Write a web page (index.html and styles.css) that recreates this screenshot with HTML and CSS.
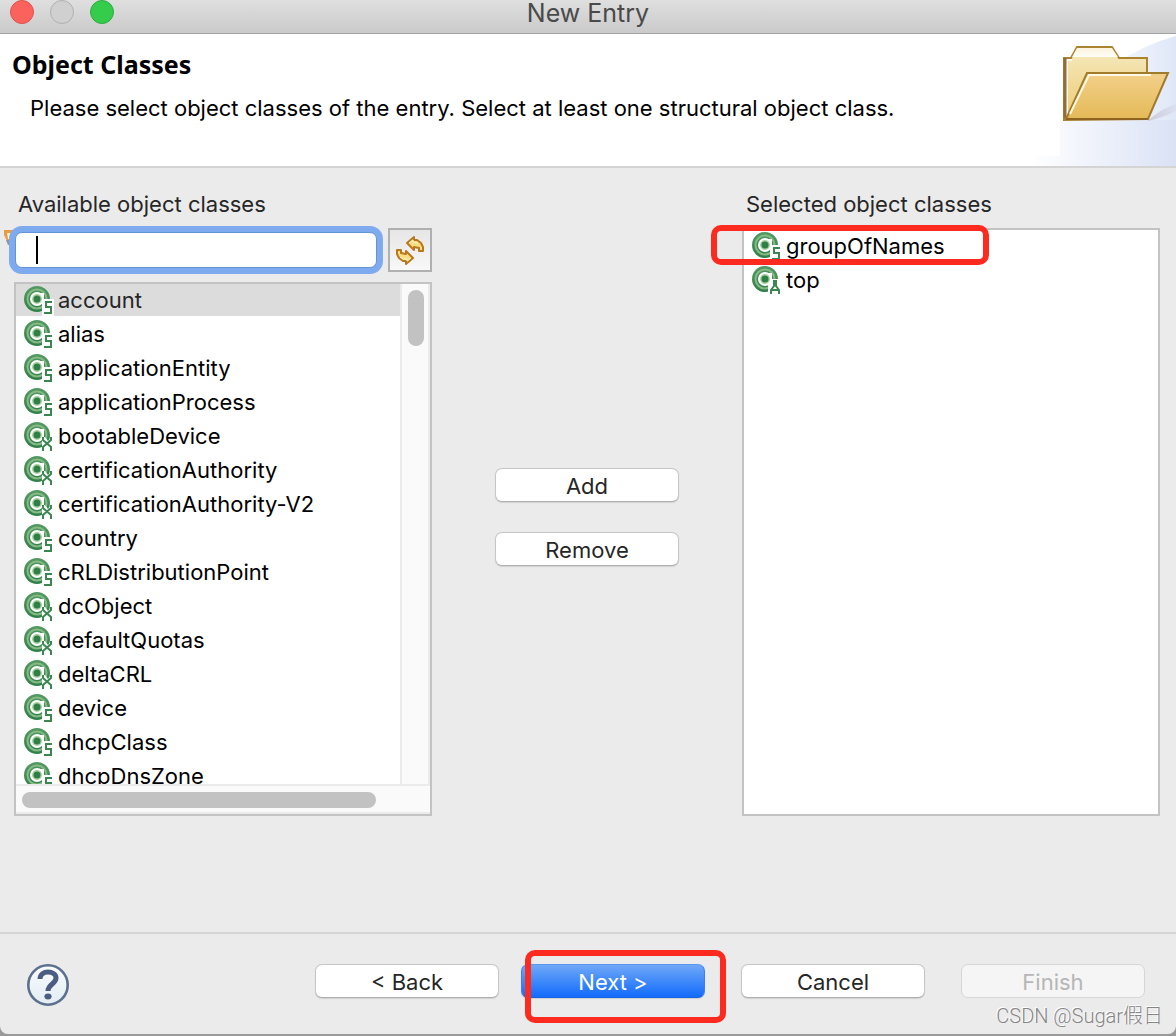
FILE: index.html
```html
<!DOCTYPE html>
<html lang="en">
<head>
<meta charset="utf-8">
<title>New Entry</title>
<link rel="stylesheet" href="styles.css">
</head>
<body>
<svg class="defs" aria-hidden="true">
  <defs>
    <linearGradient id="ring" x1="0" y1="0" x2="0" y2="1">
      <stop offset="0" stop-color="#559a64"/><stop offset="1" stop-color="#2f8048"/>
    </linearGradient>
    <symbol id="class-base" viewBox="0 0 32 32">
      <circle cx="15" cy="15" r="13" fill="url(#ring)"/>
      <circle cx="15" cy="15" r="9.500" fill="none" stroke="#86ba86" stroke-width="2"/>
      <circle cx="15" cy="15" r="7" fill="#fff"/>
      <path d="M18 9h4v11h-4z" fill="#fff"/>
      <circle cx="15" cy="15" r="5" fill="#a9d09f"/>
      <circle cx="15" cy="15" r="3.500" fill="#2f8048"/>
    </symbol>
    <symbol id="class-s" viewBox="0 0 32 32">
      <use href="#class-base"/>
      <path d="M20 15h12v17H20z" fill="#fff"/>
      <path d="M30 18h-6v5h5v6h-7" fill="none" stroke="#3b8752" stroke-width="2"/>
    </symbol>
    <symbol id="class-x" viewBox="0 0 32 32">
      <use href="#class-base"/>
      <path d="M20 17l3 0 3 4 4-4h2v15H20z" fill="#fff"/>
      <path d="M21 17v3l8 7v4M29 17v3l-8 7v4" fill="none" stroke="#3b8752" stroke-width="2"/>
    </symbol>
    <symbol id="class-a" viewBox="0 0 32 32">
      <use href="#class-base"/>
      <path d="M18 20l4-5h6l4 5v12H18z" fill="#fff"/>
      <path d="M21 30v-4l3-4v-5h2v5l3 4v4M22 26h6" fill="none" stroke="#3b8752" stroke-width="2"/>
    </symbol>
  </defs>
</svg>

<div class="window">
  <header class="titlebar">
    <div class="lights">
      <button class="light close" aria-label="Close"></button>
      <button class="light minimize" aria-label="Minimize" disabled></button>
      <button class="light maximize" aria-label="Zoom"></button>
    </div>
    <div class="title">New Entry</div>
  </header>

  <section class="banner">
    <div class="banner-text">
      <h1>Object Classes</h1>
      <p>Please select object classes of the entry. Select at least one structural object class.</p>
    </div>
    <svg class="banner-art" viewBox="0 0 146 132" aria-hidden="true">
      <defs>
        <linearGradient id="sky" x1="0" x2="1"><stop offset="0" stop-color="#fff"/><stop offset="1" stop-color="#dae2f5"/></linearGradient>
        <linearGradient id="sky2" x1="0" x2="1"><stop offset="0" stop-color="#f4f7fd"/><stop offset="1" stop-color="#dfe7f7"/></linearGradient>
        <linearGradient id="back" x1="0" y1="0" x2="0" y2="1"><stop offset="0" stop-color="#f5eac0"/><stop offset="1" stop-color="#edca70"/></linearGradient>
        <linearGradient id="front" x1="0" y1="0" x2="0" y2="1"><stop offset="0" stop-color="#f3d08b"/><stop offset="1" stop-color="#e4b957"/></linearGradient>
        <linearGradient id="tab" x1="0" y1="0" x2="0" y2="1"><stop offset="0" stop-color="#faf3dc"/><stop offset="1" stop-color="#fffdf7"/></linearGradient>
        <linearGradient id="shade" x1="0" x2="1"><stop offset="0" stop-color="#c4bccb"/><stop offset="1" stop-color="#d9ddef"/></linearGradient>
      </defs>
      <path d="M85 30Q115 10 146 2V132H85z" fill="url(#sky2)"/>
      <path d="M30 86H146V132H0V122H30z" fill="url(#sky)"/>
      <path d="M118 86L132 76 146 70V77Q135 83 118 87z" fill="url(#shade)" opacity=".7"/>
      <path d="M34 86V24h7l6-11h35l7 11h28v61z" fill="url(#back)" stroke="#a9832f" stroke-width="2"/>
      <path d="M42 23l5-9h35l6 9z" fill="url(#tab)"/>
      <path d="M37 82V26h5" fill="none" stroke="#fffaf0" stroke-width="2"/>
      <path d="M35 24v60" stroke="#946b3c" stroke-width="3"/>
      <path d="M57 39h81L118 85H36z" fill="url(#front)" stroke="#a17b2c" stroke-width="2"/>
      <path d="M40 80L59 41h62" fill="none" stroke="#fff8e4" stroke-width="2"/>
      <path d="M36 85h82" stroke="#8e6420" stroke-width="2"/>
    </svg>
  </section>

  <main class="content">
    <section class="column">
      <label class="caption caption-left" for="filter">Available object classes</label>
      <div class="filter-row">
        <svg class="hint" viewBox="0 0 12 16" aria-hidden="true"><path d="M0 0h12v6L8 11H3L0 5z" fill="#e99a45"/><path d="M3 3h4v6H4z" fill="#fff0c8"/><path d="M2 10h7v5H4z" fill="#8d949c"/></svg>
        <div class="filter-box">
          <input class="filter" id="filter" type="text">
          <span class="caret"></span>
        </div>
        <button class="refresh" aria-label="Refresh">
          <svg viewBox="0 0 32 32" aria-hidden="true">
            <g fill="#f9dc83" stroke="#b9781c" stroke-width="2" stroke-linejoin="round">
              <path d="M13 9l7-6v3h3l4 3 2 4v4h-4v-3l-5-1v3z"/>
              <path d="M19 24l-7 6v-3h-3l-4-3-2-4v-4h4v3l5 1v-3z"/>
            </g>
            <path d="M15 9l4-3v2l5 1M6 23l3 2h4v2l4-3" fill="none" stroke="#fff4c8" stroke-width="1"/>
          </svg>
        </button>
      </div>
      <div class="listbox scrollable">
        <ul class="items" role="listbox" aria-label="Available object classes">
          <li class="item selected" role="option" aria-selected="true"><svg class="icon"><use href="#class-s"/></svg>account</li>
          <li class="item" role="option"><svg class="icon"><use href="#class-s"/></svg>alias</li>
          <li class="item" role="option"><svg class="icon"><use href="#class-s"/></svg>applicationEntity</li>
          <li class="item" role="option"><svg class="icon"><use href="#class-s"/></svg>applicationProcess</li>
          <li class="item" role="option"><svg class="icon"><use href="#class-x"/></svg>bootableDevice</li>
          <li class="item" role="option"><svg class="icon"><use href="#class-x"/></svg>certificationAuthority</li>
          <li class="item" role="option"><svg class="icon"><use href="#class-x"/></svg>certificationAuthority-V2</li>
          <li class="item" role="option"><svg class="icon"><use href="#class-s"/></svg>country</li>
          <li class="item" role="option"><svg class="icon"><use href="#class-s"/></svg>cRLDistributionPoint</li>
          <li class="item" role="option"><svg class="icon"><use href="#class-x"/></svg>dcObject</li>
          <li class="item" role="option"><svg class="icon"><use href="#class-x"/></svg>defaultQuotas</li>
          <li class="item" role="option"><svg class="icon"><use href="#class-x"/></svg>deltaCRL</li>
          <li class="item" role="option"><svg class="icon"><use href="#class-s"/></svg>device</li>
          <li class="item" role="option"><svg class="icon"><use href="#class-s"/></svg>dhcpClass</li>
          <li class="item" role="option"><svg class="icon"><use href="#class-s"/></svg>dhcpDnsZone</li>
        </ul>
        <div class="track track-y"><div class="thumb"></div></div>
        <div class="track track-x"><div class="thumb"></div></div>
      </div>
    </section>

    <div class="transfer">
      <button class="btn">Add</button>
      <button class="btn">Remove</button>
    </div>

    <section class="column">
      <div class="caption">Selected object classes</div>
      <div class="listbox">
        <ul class="items" role="listbox" aria-label="Selected object classes">
          <li class="item" role="option"><svg class="icon"><use href="#class-s"/></svg>groupOfNames</li>
          <li class="item" role="option"><svg class="icon"><use href="#class-a"/></svg>top</li>
        </ul>
        <span class="mark mark-entry"></span>
      </div>
    </section>
  </main>

  <footer class="footer">
    <button class="help" aria-label="Help">
      <svg viewBox="0 0 42 42" aria-hidden="true">
        <defs><linearGradient id="glass" x1="0" y1="0" x2="0" y2="1"><stop offset="0" stop-color="#f8fbfd"/><stop offset="1" stop-color="#e3edf3"/></linearGradient></defs>
        <circle cx="21" cy="21" r="19.7" fill="url(#glass)" stroke="#5b6f8f" stroke-width="2.6"/>
        <path d="M13 15c0-5 4-7 8-7s8 2 8 6c0 6-8 6-8 13" fill="none" stroke="#4b5d80" stroke-width="5"/>
        <ellipse cx="21" cy="32.500" rx="3.600" ry="3" fill="#4b5d80"/>
      </svg>
    </button>
    <div class="pair">
      <button class="btn">&lt; Back</button>
      <div class="next-wrap">
        <button class="btn primary">Next &gt;</button>
        <span class="mark mark-next"></span>
      </div>
    </div>
    <button class="btn">Cancel</button>
    <button class="btn" disabled>Finish</button>
    <span class="watermark">CSDN @Sugar假日</span>
  </footer>
</div>
</body>
</html>
```
FILE: styles.css
```css
* { box-sizing: border-box; }

body {
  margin: 0;
  background: #999;
  color: #000;
  font: 22px/32px Inter, "Noto Sans CJK SC", sans-serif;
}

button, input { font: inherit; }

.defs { position: absolute; width: 0; height: 0; }

.window {
  display: flex;
  flex-direction: column;
  height: calc(100vh - 2px);
  background: #ebebeb;
  border-radius: 0 0 8px 8px;
}

/* Title bar */
.titlebar {
  display: grid;
  grid-template-columns: 1fr auto 1fr;
  align-items: start;
  height: 34px;
  padding: 0 10px;
  background: linear-gradient(#dfdfdf, #cacaca);
  border-bottom: 1px solid #a3a3a3;
}
.lights { display: flex; gap: 16px; }
.light {
  width: 24px;
  height: 24px;
  padding: 0;
  border: 1px solid;
  border-radius: 50%;
}
.close { background: #fc625d; border-color: #e0504b; }
.minimize { background: #d0d0d0; border-color: #b0b0b0; }
.maximize { background: #35cb4b; border-color: #2aad3c; }
.title { font-size: 25px; line-height: 26px; color: #4a4a4a; }

/* Wizard banner */
.banner {
  display: flex;
  justify-content: space-between;
  height: 134px;
  background: #fff;
  border-bottom: 2px solid #d4d4d4;
}
.banner-text { padding: 14px 0 0 12px; }
.banner h1 {
  margin: 0;
  font: bold 25px/32px "Noto Sans", sans-serif;
}
.banner p { margin: 12px 0 0 18px; }
.banner-art { width: 146px; height: 132px; }

/* Lists */
.content {
  display: grid;
  grid-template-columns: 1fr 310px 1fr;
  grid-template-rows: minmax(0, 1fr);
  flex: 1;
  min-height: 0;
  padding: 20px 16px 116px 14px;
}
.column {
  display: flex;
  flex-direction: column;
  min-height: 0;
}
.caption { padding-left: 4px; margin-bottom: 8px; color: #262626; }

.filter-row {
  position: relative;
  display: flex;
  align-items: center;
  gap: 11px;
  margin-bottom: 10px;
  padding-left: 1px;
}
.hint { position: absolute; left: -10px; top: 2px; width: 12px; height: 16px; }
.filter-box { position: relative; flex: 1; display: flex; }
.filter {
  width: 100%;
  height: 36px;
  padding: 0 18px;
  background: #fff;
  border: 1px solid #6692d8;
  border-radius: 7px;
  outline: none;
  box-shadow: 0 0 0 6px #7eaaf0;
}
.caret { position: absolute; left: 21px; top: 4px; width: 2px; height: 28px; background: #000; }
.refresh {
  display: flex;
  width: 44px;
  height: 44px;
  padding: 4px;
  background: linear-gradient(#e6e6e6, #f8f8f8);
  border: 2px solid #b0b0b0;
}

.listbox {
  position: relative;
  flex: 1;
  min-height: 0;
  background: #fff;
  border: 2px solid #c3c3c3;
}
.scrollable {
  display: grid;
  grid-template: minmax(0, 1fr) 30px / minmax(0, 1fr) 30px;
  background: #fafafa;
}
.items {
  display: flex;
  flex-direction: column;
  gap: 2px;
  margin: 0;
  padding: 0;
  overflow: hidden;
  list-style: none;
  background: #fff;
}
.item {
  display: flex;
  flex: none;
  gap: 4px;
  height: 32px;
  padding-left: 6px;
}
.selected { background: #dcdcdc; color: #262626; }
.icon { width: 32px; height: 32px; }

.track { padding: 6px; }
.track-y { border: solid #ebebeb; border-width: 0 2px; padding: 6px 4px 6px 6px; }
.track-x { grid-column: 1 / 3; border: solid #ebebeb; border-width: 2px 0; }
.thumb { background: #c2c2c2; border-radius: 8px; }
.track-y .thumb { width: 16px; height: 56px; }
.track-x .thumb { width: 88%; height: 16px; }

/* Buttons */
.transfer {
  display: flex;
  flex-direction: column;
  align-items: center;
  justify-content: center;
  gap: 30px;
  padding-top: 30px;
}
.btn {
  width: 184px;
  height: 34px;
  padding: 2px 0 0;
  color: #262626;
  line-height: 30px;
  background: #fff;
  border: 1px solid #c6c6c6;
  border-bottom-color: #b0b0b0;
  border-radius: 7px;
  box-shadow: 0 1px 1px #d0d0d0;
}
.btn:disabled {
  color: #b6b6b6;
  background: #f5f5f5;
  border-color: #d6d6d6;
  box-shadow: none;
}
.primary {
  color: #fff;
  background: linear-gradient(#6fa8f7, #126bfd);
  border-color: #5a97f0 #3a80f0 #1763e0;
}

/* Footer */
.footer {
  position: relative;
  display: flex;
  gap: 36px;
  height: 102px;
  padding: 30px 31px 0 27px;
  border-top: 2px solid #d4d4d4;
}
.help {
  width: 42px;
  height: 42px;
  margin-right: auto;
  padding: 0;
  background: none;
  border: 0;
}
.help svg { display: block; }
.pair { display: flex; gap: 22px; }
.next-wrap { position: relative; height: 34px; display: flex; }

/* Highlight frames */
.mark {
  position: absolute;
  border: 6px solid #fd2b1f;
  border-radius: 10px;
  pointer-events: none;
}
.mark-entry { left: -33px; top: -5px; width: 278px; height: 40px; }
.mark-next { left: 4px; top: -14px; width: 201px; height: 73px; }

.watermark {
  position: absolute;
  right: 13px;
  bottom: 2px;
  font: 300 20px/32px Roboto, "Noto Sans CJK SC", sans-serif;
  color: #858585;
  text-shadow: -1px -1px 0 #fff;
}
```
